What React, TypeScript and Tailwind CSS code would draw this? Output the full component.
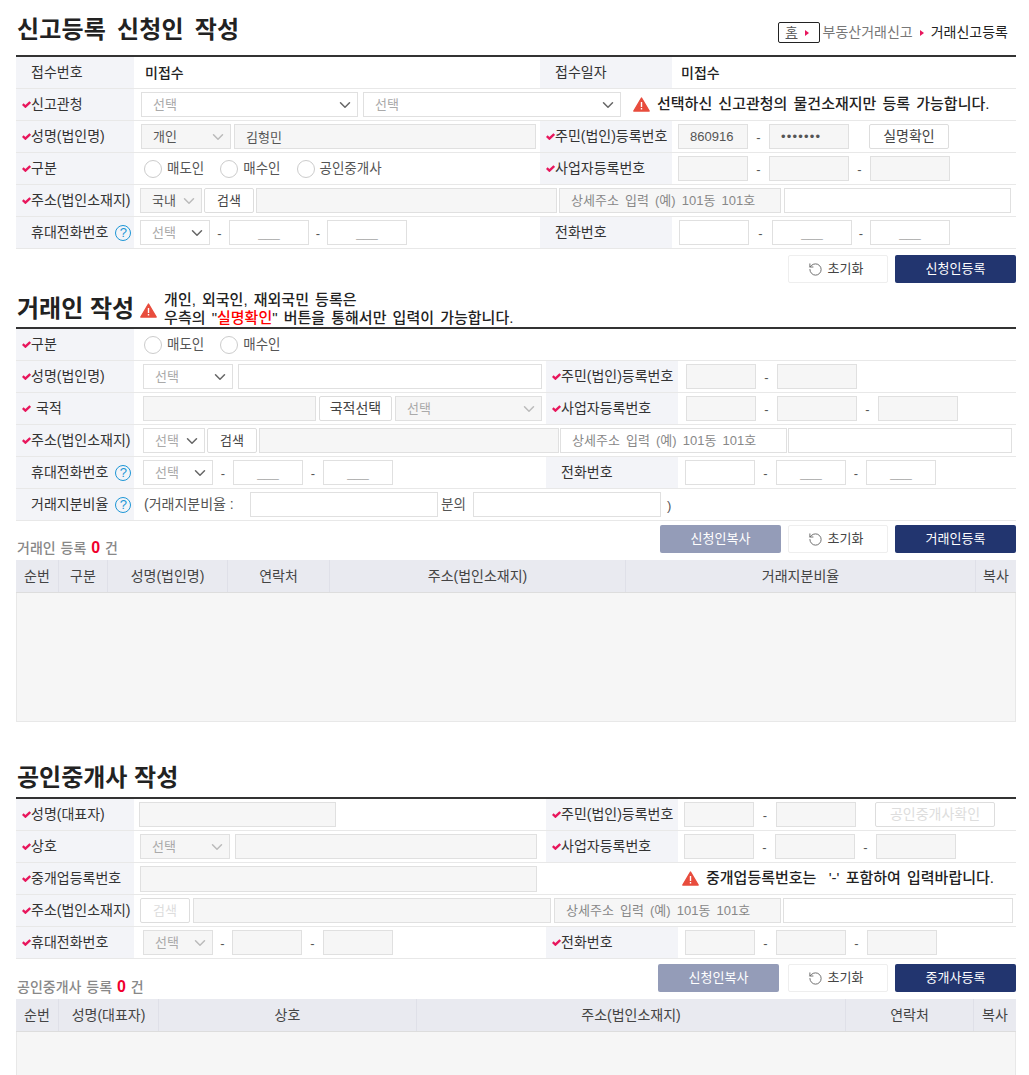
import type { ReactNode } from 'react'
import { ChevronDown, RotateCcw } from 'lucide-react'

const Check = () => (
  <svg width="9" height="7" viewBox="0 0 9 7" className="shrink-0">
    <path d="M0.8 3.2 L3.4 5.6 L8.2 1" fill="none" stroke="#e8175d" strokeWidth="2.4" />
  </svg>
)

const Warn = ({ className = '' }: { className?: string }) => (
  <svg width="17" height="15" viewBox="0 0 17 15" className={`shrink-0 ${className}`}>
    <path d="M8.5 1 L16.2 14 H0.8 Z" fill="#e84c3d" stroke="#e84c3d" strokeWidth="1.4" strokeLinejoin="round" />
    <rect x="7.8" y="5" width="1.4" height="5" fill="#fff" />
    <rect x="7.8" y="11" width="1.4" height="1.5" fill="#fff" />
  </svg>
)

const Help = () => (
  <span className="ml-[7px] flex h-[16px] w-[16px] shrink-0 items-center justify-center rounded-full border-[1.5px] border-[#1e96d6] text-[13px] leading-none text-[#1e96d6]">
    ?
  </span>
)

const Label = ({ text, req, help, wide, gap }: { text: string; req?: boolean; help?: boolean; wide?: boolean; gap?: boolean }) => (
  <div className={`flex h-full shrink-0 items-center bg-[#f3f4f8] text-[#333] ${wide ? 'w-[132px]' : 'w-[118px]'} ${req ? 'pl-[6px]' : 'pl-[15px]'}`}>
    {req && <Check />}
    <span className={gap ? 'ml-[5px]' : ''}>{text}</span>
    {help && <Help />}
  </div>
)

const Row = ({ children }: { children: ReactNode }) => (
  <div className="flex h-[32px] items-center border-b border-[#e8e8e8]">{children}</div>
)

const Left = ({ children, w = 'w-[406px]' }: { children?: ReactNode; w?: string }) => (
  <div className={`flex h-full shrink-0 items-center ${w}`}>{children}</div>
)

const Inp = ({ className = '', off, ph, value, pw }: { className?: string; off?: boolean; ph?: string; value?: string; pw?: boolean }) => (
  <input
    readOnly
    type={pw ? 'password' : 'text'}
    placeholder={ph}
    value={value}
    className={`h-[25px] shrink-0 border border-[#e0e0e0] px-[11px] text-[13px] text-[#555] outline-none placeholder:text-[#888] ${off ? 'bg-[#f6f6f6]' : 'bg-white'} ${ph === '___' ? 'text-center placeholder:text-[#aaa]' : ''} ${pw ? 'tracking-[1.2px]' : ''} ${className}`}
  />
)

const Sel = ({ className = '', off, text = '선택', pale }: { className?: string; off?: boolean; text?: string; pale?: boolean }) => (
  <div className={`flex h-[25px] shrink-0 items-center justify-between border border-[#e0e0e0] pl-[11px] pr-[3px] text-[13px] ${off ? 'bg-[#f6f6f6]' : 'bg-white'} ${text === '선택' ? 'text-[#aaa]' : 'text-[#555]'} ${className}`}>
    <span>{text}</span>
    <ChevronDown size={18} strokeWidth={2} color={pale ? '#bbb' : '#666'} />
  </div>
)

const Btn = ({ children, className = '', off }: { children: ReactNode; className?: string; off?: boolean }) => (
  <button className={`h-[25px] shrink-0 rounded-[2px] border border-[#ddd] bg-white ${off ? 'text-[#ddd]' : 'text-[#444]'} ${className}`}>
    {children}
  </button>
)

const Dash = ({ className = '' }: { className?: string }) => (
  <span className={`shrink-0 pt-[2px] text-center text-[13px] text-[#555] ${className}`}>-</span>
)

const Radios = ({ items }: { items: string[] }) => (
  <div className="ml-[10px] flex items-center text-[13.5px] text-[#555]">
    {items.map((t) => (
      <label key={t} className="mr-[16px] flex items-center">
        <input type="radio" className="h-[18px] w-[18px] appearance-none rounded-full border border-[#ccc] bg-white" />
        <span className="ml-[5px] pt-[2px]">{t}</span>
      </label>
    ))}
  </div>
)

const Rule = () => <div className="h-[2px] bg-[#333]" />

const Title = ({ children, className = '' }: { children: ReactNode; className?: string }) => (
  <h2 className={`text-[24px] font-bold leading-[28px] text-[#222] ${className}`}>{children}</h2>
)

const Actions = ({ copy, submit, count, className, copyCls }: { copy?: boolean; submit: string; count?: ReactNode; className: string; copyCls?: string }) => (
  <div className={`flex h-[28px] justify-between text-[13px] ${className}`}>
    <div className="ml-px mt-[11px] h-[20px] text-[14px] font-medium text-[#888] [word-spacing:1px]">{count}</div>
    <div className="flex">
      {copy && (
        <button className={`h-[28px] w-[121px] rounded-[2px] bg-[#949cb8] text-white ${copyCls}`}>신청인복사</button>
      )}
      <button className="flex h-[28px] w-[100px] items-center justify-center rounded-[2px] border border-[#eee] bg-white pr-[5px] text-[#444]">
        <RotateCcw size={15} strokeWidth={1.5} color="#666" className="mr-[5px]" />
        초기화
      </button>
      <button className="ml-[7px] h-[28px] w-[121px] rounded-[2px] bg-[#22356f] text-white">{submit}</button>
    </div>
  </div>
)

const Count = ({ name }: { name: string }) => (
  <>
    {name} 등록 <b className="text-[16px] text-[#f0002d]">0</b> 건
  </>
)

const Head = ({ cols }: { cols: [string, string][] }) => (
  <div className="flex h-[33px] border-b border-[#ddd] bg-[#e9eaf0] text-[#444]">
    {cols.map(([t, w]) => (
      <div key={t} className={`flex h-full items-center justify-center border-r border-[#dfe0e8] last:border-r-0 ${w}`}>
        {t}
      </div>
    ))}
  </div>
)

export default function App() {
  return (
    <div className="h-[1075px] w-[1029px] overflow-hidden bg-white pl-[16px] font-['Liberation_Sans','Noto_Sans_CJK_KR',sans-serif] text-[14px]">
      <div className="w-[1000px]">
        {/* 신청인 */}
        <div className="flex h-[55px] items-end justify-between pb-[11px] pl-px">
          <Title className="tracking-[0.2px] [word-spacing:4px]">신고등록 신청인 작성</Title>
          <div className="mb-[1px] flex items-center pr-[8px] text-[#777]">
            <div className="flex h-[21px] w-[42px] items-center rounded-[2px] border border-[#222] pl-[7px] text-[13px] text-[#555]">
              <span className="underline">홈</span>
              <span className="ml-[7px] h-0 w-0 border-y-[3px] border-l-[4px] border-y-transparent border-l-[#e8175d]" />
            </div>
            <span className="ml-[3px]">부동산거래신고</span>
            <span className="ml-[7px] h-0 w-0 border-y-[3px] border-l-[4px] border-y-transparent border-l-[#e8175d]" />
            <span className="ml-[7px] text-[#222]">거래신고등록</span>
          </div>
        </div>
        <Rule />
        <Row>
          <Label text="접수번호" />
          <Left><b className="ml-[11px] pt-px font-medium text-[#222]">미접수</b></Left>
          <Label text="접수일자" wide />
          <b className="ml-[9px] pt-px font-medium text-[#222]">미접수</b>
        </Row>
        <Row>
          <Label text="신고관청" req />
          <Sel className="ml-[7px] w-[217px]" />
          <Sel className="ml-[5px] w-[258px]" />
          <Warn className="ml-[12px]" />
          <b className="ml-[7px] whitespace-nowrap text-[15px] font-medium text-[#222] [word-spacing:2px]">선택하신 신고관청의 물건소재지만 등록 가능합니다.</b>
        </Row>
        <Row>
          <Label text="성명(법인명)" req />
          <Left>
            <Sel className="ml-[7px] w-[90px]" off pale text="개인" />
            <Inp className="ml-[3px] w-[302px]" off value="김형민" />
          </Left>
          <Label text="주민(법인)등록번호" req wide />
          <Inp className="ml-[6px] w-[70px]" off value="860916" />
          <Dash className="w-[21px]" />
          <Inp className="w-[80px]" off pw value="1234567" />
          <Btn className="ml-[20px] w-[80px]">실명확인</Btn>
        </Row>
        <Row>
          <Label text="구분" req />
          <Left><Radios items={['매도인', '매수인', '공인중개사']} /></Left>
          <Label text="사업자등록번호" req wide />
          <Inp className="ml-[6px] w-[70px]" off />
          <Dash className="w-[21px]" />
          <Inp className="w-[80px]" off />
          <Dash className="w-[21px]" />
          <Inp className="w-[80px]" off />
        </Row>
        <Row>
          <Label text="주소(법인소재지)" req />
          <Sel className="ml-[6px] w-[62px]" off pale text="국내" />
          <Btn className="ml-[2px] w-[50px] text-[13px]">검색</Btn>
          <Inp className="ml-[2px] w-[301px]" off />
          <Inp className="ml-[2px] w-[222px] [word-spacing:2.5px]" off ph="상세주소 입력 (예) 101동 101호" />
          <Inp className="ml-[3px] w-[227px]" />
        </Row>
        <Row>
          <Label text="휴대전화번호" help />
          <Left>
            <Sel className="ml-[6px] w-[70px]" />
            <Dash className="w-[19px]" />
            <Inp className="w-[80px]" ph="___" />
            <Dash className="w-[18px]" />
            <Inp className="w-[80px]" ph="___" />
          </Left>
          <Label text="전화번호" wide />
          <Inp className="ml-[7px] w-[70px]" />
          <Dash className="w-[23px]" />
          <Inp className="w-[80px]" ph="___" />
          <Dash className="w-[18px]" />
          <Inp className="w-[80px]" ph="___" />
        </Row>
        <Actions submit="신청인등록" className="mt-[6px]" />

        {/* 거래인 */}
        <div className="flex h-[44px] items-end pb-[4px] pl-px">
          <Title>거래인 작성</Title>
          <Warn className="mb-[5px] ml-[6px]" />
          <div className="relative ml-[7px] h-[28px] w-[360px]">
            <p className="absolute bottom-[-4px] left-0 whitespace-nowrap text-[15px] font-medium leading-[18px] text-[#222] [word-spacing:2px]">
              개인, 외국인, 재외국민 등록은
              <br />
              우측의 "<span className="text-[#f00]">실명확인</span>" 버튼을 통해서만 입력이 가능합니다.
            </p>
          </div>
        </div>
        <Rule />
        <Row>
          <Label text="구분" req />
          <Radios items={['매도인', '매수인']} />
        </Row>
        <Row>
          <Label text="성명(법인명)" req />
          <Left w="w-[412px]">
            <Sel className="ml-[9px] w-[90px]" />
            <Inp className="ml-[5px] w-[304px]" />
          </Left>
          <Label text="주민(법인)등록번호" req wide />
          <Inp className="ml-[8px] w-[70px]" off />
          <Dash className="w-[21px]" />
          <Inp className="w-[80px]" off />
        </Row>
        <Row>
          <Label text="국적" req gap />
          <Left w="w-[412px]">
            <Inp className="ml-[9px] w-[173px]" off />
            <Btn className="ml-[3px] w-[73px]">국적선택</Btn>
            <Sel className="ml-[3px] w-[147px]" off pale />
          </Left>
          <Label text="사업자등록번호" req wide />
          <Inp className="ml-[8px] w-[70px]" off />
          <Dash className="w-[21px]" />
          <Inp className="w-[80px]" off />
          <Dash className="w-[21px]" />
          <Inp className="w-[80px]" off />
        </Row>
        <Row>
          <Label text="주소(법인소재지)" req />
          <Sel className="ml-[9px] w-[62px]" />
          <Btn className="ml-[2px] w-[50px] text-[13px]">검색</Btn>
          <Inp className="ml-[2px] w-[300px]" off />
          <Inp className="ml-px w-[227px] [word-spacing:2.5px]" ph="상세주소 입력 (예) 101동 101호" />
          <Inp className="ml-px w-[224px]" />
        </Row>
        <Row>
          <Label text="휴대전화번호" help />
          <Left w="w-[412px]">
            <Sel className="ml-[9px] w-[70px]" />
            <Dash className="w-[20px]" />
            <Inp className="w-[70px]" ph="___" />
            <Dash className="w-[20px]" />
            <Inp className="w-[70px]" ph="___" />
          </Left>
          <Label text="전화번호" wide />
          <Inp className="ml-[7px] w-[70px]" />
          <Dash className="w-[21px]" />
          <Inp className="w-[70px]" ph="___" />
          <Dash className="w-[20px]" />
          <Inp className="w-[70px]" ph="___" />
        </Row>
        <Row>
          <Label text="거래지분비율" help />
          <span className="ml-[10px] w-[106px] whitespace-nowrap text-[14px] text-[#555]">(거래지분비율 :</span>
          <Inp className="w-[188px]" />
          <span className="ml-[3px] w-[32px] pt-px text-[13.5px] text-[#555]">분의</span>
          <Inp className="w-[188px]" />
          <span className="ml-[6px] pt-[2px] text-[13px] text-[#555]">)</span>
        </Row>
        <Actions copy submit="거래인등록" className="mt-[4px]" copyCls="mr-[7px]" count={<Count name="거래인" />} />
        <div className="mt-[7px]">
          <Head cols={[['순번', 'w-[43px]'], ['구분', 'w-[49px]'], ['성명(법인명)', 'w-[120px]'], ['연락처', 'w-[102px]'], ['주소(법인소재지)', 'w-[296px]'], ['거래지분비율', 'w-[350px]'], ['복사', 'w-[40px]']]} />
          <div className="h-[129px] border border-t-0 border-[#e8e8e8] bg-[#f6f6f6]" />
        </div>

        {/* 공인중개사 */}
        <div className="flex h-[75px] items-end pb-[5px] pl-px">
          <Title>공인중개사 작성</Title>
        </div>
        <Rule />
        <Row>
          <Label text="성명(대표자)" req />
          <Left w="w-[412px]"><Inp className="ml-[5px] w-[197px]" off /></Left>
          <Label text="주민(법인)등록번호" req wide />
          <Inp className="ml-[6px] w-[70px]" off />
          <Dash className="w-[22px]" />
          <Inp className="w-[80px]" off />
          <Btn className="ml-[19px] w-[120px]" off>공인중개사확인</Btn>
        </Row>
        <Row>
          <Label text="상호" req />
          <Left w="w-[412px]">
            <Sel className="ml-[6px] w-[90px]" off pale />
            <Inp className="ml-[5px] w-[302px]" off />
          </Left>
          <Label text="사업자등록번호" req wide />
          <Inp className="ml-[6px] w-[70px]" off />
          <Dash className="w-[21px]" />
          <Inp className="w-[80px]" off />
          <Dash className="w-[21px]" />
          <Inp className="w-[80px]" off />
        </Row>
        <Row>
          <Label text="중개업등록번호" req />
          <Inp className="ml-[6px] h-[26px] w-[397px]" off />
          <Warn className="ml-[145px]" />
          <b className="ml-[7px] whitespace-nowrap text-[15px] font-medium text-[#222] [word-spacing:2px]">중개업등록번호는 &nbsp;'-' 포함하여 입력바랍니다.</b>
        </Row>
        <Row>
          <Label text="주소(법인소재지)" req />
          <Btn className="ml-[6px] w-[50px] text-[13px]" off>검색</Btn>
          <Inp className="ml-[3px] w-[358px]" off />
          <Inp className="ml-[3px] w-[227px] [word-spacing:2.5px]" off ph="상세주소 입력 (예) 101동 101호" />
          <Inp className="ml-[2px] w-[230px]" />
        </Row>
        <Row>
          <Label text="휴대전화번호" req />
          <Left w="w-[412px]">
            <Sel className="ml-[9px] w-[70px]" off pale />
            <Dash className="w-[19px]" />
            <Inp className="w-[70px]" off />
            <Dash className="w-[21px]" />
            <Inp className="w-[70px]" off />
          </Left>
          <Label text="전화번호" req wide />
          <Inp className="ml-[7px] w-[70px]" off />
          <Dash className="w-[21px]" />
          <Inp className="w-[70px]" off />
          <Dash className="w-[21px]" />
          <Inp className="w-[70px]" off />
        </Row>
        <Actions copy submit="중개사등록" className="mt-[5px]" copyCls="mr-[9px]" count={<Count name="공인중개사" />} />
        <div className="mt-[7px]">
          <Head cols={[['순번', 'w-[43px]'], ['성명(대표자)', 'w-[100px]'], ['상호', 'w-[258px]'], ['주소(법인소재지)', 'w-[429px]'], ['연락처', 'w-[128px]'], ['복사', 'w-[42px]']]} />
          <div className="h-[129px] border border-t-0 border-[#e8e8e8] bg-[#f6f6f6]" />
        </div>
      </div>
    </div>
  )
}
